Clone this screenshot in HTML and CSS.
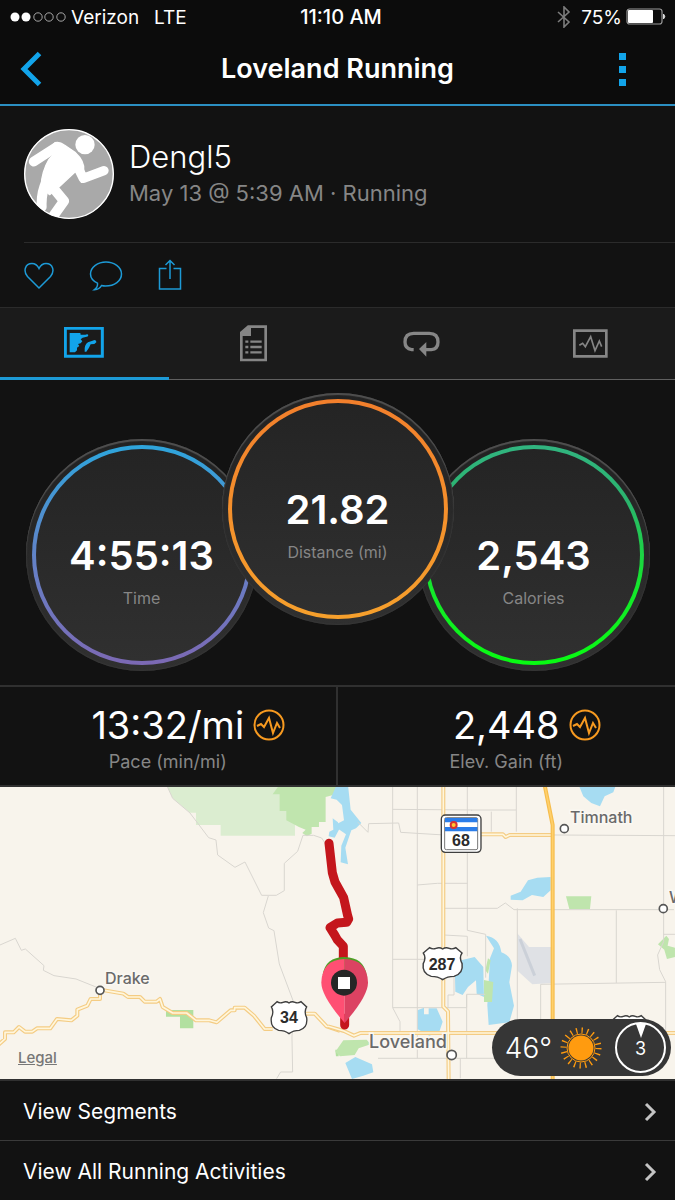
FILE: index.html
```
<!doctype html>
<html lang="en">
<head>
	<meta charset="utf-8">
	<meta name="viewport" content="width=device-width, initial-scale=1">
	<title>Loveland Running</title>
	<link rel="stylesheet" href="styles.css">
</head>
<body>
	<div class="status">
		<div class="status-left">
			<svg class="signal" width="56" height="12" viewBox="0 0 56 12">
				<g fill="#fff"><circle cx="5" cy="6" r="4.5"/><circle cx="16" cy="6" r="4.5"/></g>
				<g fill="none" stroke="#ccc" stroke-width=".8"><circle cx="28" cy="6" r="4.2"/><circle cx="39" cy="6" r="4.2"/><circle cx="51" cy="6" r="4.2"/></g>
			</svg>
			<span>Verizon</span>
			<span class="network">LTE</span>
		</div>
		<div class="clock">11:10 AM</div>
		<div class="status-right">
			<svg width="14" height="22" viewBox="0 0 14 22" fill="none" stroke="#7d7d7d" stroke-width="1.6"><path d="M1 6l11 10-5 5V1l5 5L1 16"/></svg>
			<span class="percent">75%</span>
			<svg width="40" height="18" viewBox="0 0 40 18">
				<rect x="1" y="1" width="35" height="15" rx="2.5" fill="none" stroke="#999" stroke-width="1.2"/>
				<rect x="2" y="2" width="25" height="13" rx="1" fill="#fff"/>
				<path d="M37.5 6q2.500 2.500 0 5z" fill="#fff" stroke="#ddd"/>
			</svg>
		</div>
	</div>

	<header class="header">
		<button class="icon-btn" aria-label="Back">
			<svg width="22" height="36" viewBox="0 0 22 36" fill="none" stroke="#12a4ea" stroke-width="5"><path d="M19.500 2.500L4 18l15.500 15.500"/></svg>
		</button>
		<h1>Loveland Running</h1>
		<button class="icon-btn menu" aria-label="More">
			<svg width="7" height="33" viewBox="0 0 7 33" fill="#12a4ea"><path d="M0 0h7v7H0zM0 13h7v7H0zM0 26h7v7H0z"/></svg>
		</button>
	</header>

	<section class="profile">
		<div class="user">
			<svg class="avatar" viewBox="73 56 270 270">
				<defs><clipPath id="face"><circle cx="208" cy="191" r="134"/></clipPath></defs>
				<circle cx="208" cy="191" r="134" fill="#a9a9a9"/>
				<g clip-path="url(#face)" fill="#fff" stroke="#fff" stroke-linecap="round" stroke-linejoin="round">
					<circle cx="256" cy="103" r="29" stroke="none"/>
					<path d="M102 154l68-44" fill="none" stroke-width="29"/>
					<path d="M166 97q14-4 28 7l32 22q30 28 26 55l-26 4-45 42-31 26-26-24q2-45 24-82l20-22-16-12z" stroke-width="4"/>
					<path d="M234 170l17 34 62-23" fill="none" stroke-width="28"/>
					<path d="M140 215q-16 32-14 75M155 226l38 46-34 48" fill="none" stroke-width="30"/>
				</g>
				<circle cx="208" cy="191" r="133" fill="none" stroke="#fff" stroke-width="4"/>
			</svg>
			<div>
				<h2>Dengl5</h2>
				<p class="when">May 13 @ 5:39 AM · Running</p>
			</div>
		</div>
		<div class="actions">
			<button class="icon-btn" aria-label="Like">
				<svg width="30" height="30" viewBox="0 0 30 30"><path d="M15 28L3.500 16.500C-1 11 1 3.500 8 3.500c4 0 6 3 7 5 1-2 3-5 7-5 7 0 9 7.500 4.500 13z"/></svg>
			</button>
			<button class="icon-btn" aria-label="Comment">
				<svg width="34" height="32" viewBox="0 0 34 32"><path d="M8.500 24.200C4 22 1.500 19 1.500 15 1.500 8 9 3 17 3s15.500 5 15.500 12-7 12-16 12q-2 0-4-.5-2 4-7 4.200 3.500-2.500 3-6.500z"/></svg>
			</button>
			<button class="icon-btn" aria-label="Share">
				<svg width="24" height="32" viewBox="0 0 24 32"><path d="M8.500 9.500H1.500V30H22.500V9.500H15.500M12 20V2M7.500 6L12 1.500 16.500 6"/></svg>
			</button>
		</div>
	</section>

	<nav class="tabs">
		<a href="#map" class="tab active" aria-label="Map">
			<svg width="40" height="31" viewBox="43 38 120 93" fill="none" stroke="#12a4ea">
				<path d="M47 42h111v84H47z" stroke-width="9"/>
				<path d="M60 56h32l1 5 14 0q8-3 9 2 0 5-8 5l-9 2-6 5 5 6-5 6-8 2 4 6-7 5v8l-6 6H60z" fill="#12a4ea" stroke="none"/>
				<path d="M105 112q-2-20 10-28l20-7q6 1 5 7l-6 5-11 1-5 10-8 12z" fill="#12a4ea" stroke="none"/>
			</svg>
		</a>
		<a href="#details" class="tab" aria-label="Details">
			<svg width="27" height="37" viewBox="569 29 81 111" fill="none" stroke="#868686">
				<path d="M573 134V52l21-18h52v100z" stroke-width="8"/>
				<path d="M573 62V52l21-18h8v28z" fill="#868686" stroke="none"/>
				<path d="M600 79h34M600 95h34M600 111h34" stroke-width="7"/>
				<path d="M585 79h9M585 95h9M585 111h9" stroke-width="7"/>
			</svg>
		</a>
		<a href="#laps" class="tab" aria-label="Laps">
			<svg width="37" height="26" viewBox="25 52 111 78" fill="none" stroke="#868686">
				<path d="M57 108h-6q-20-3-20-23 0-26 26-26h47q26 0 26 26 0 21-20 23H92" stroke-width="10"/>
				<path d="M73 106l22-21v44z" fill="#868686" stroke="none"/>
			</svg>
		</a>
		<a href="#charts" class="tab" aria-label="Charts">
			<svg width="35" height="29" viewBox="534 41 105 87" fill="none" stroke="#868686">
				<path d="M538 46h96v77h-96z" stroke-width="8"/>
				<path d="M553 90l10-6 8 10 16-30 13 42 13-29 7 17" stroke-width="5"/>
			</svg>
		</a>
	</nav>

	<section class="dials">
		<div class="dial">
			<div class="ring time">
				<strong>4:55:13</strong>
				<span>Time</span>
			</div>
		</div>
		<div class="dial front">
			<div class="ring distance">
				<strong>21.82</strong>
				<span>Distance (mi)</span>
			</div>
		</div>
		<div class="dial">
			<div class="ring calories">
				<strong>2,543</strong>
				<span>Calories</span>
			</div>
		</div>
	</section>

	<section class="stats">
		<div class="stat">
			<div class="stat-value">
				<b>13:32/mi</b>
				<svg width="32" height="32" viewBox="0 0 32 32"><circle cx="16" cy="16" r="14.500"/><path d="M4 17l4-2 3 3 5-9 4 15 4-10 3 5"/></svg>
			</div>
			<p>Pace (min/mi)</p>
		</div>
		<div class="stat">
			<div class="stat-value">
				<b>2,448</b>
				<svg width="32" height="32" viewBox="0 0 32 32"><circle cx="16" cy="16" r="14.500"/><path d="M4 17l4-2 3 3 5-9 4 15 4-10 3 5"/></svg>
			</div>
			<p>Elev. Gain (ft)</p>
		</div>
	</section>

	<section class="map">
		<svg class="map-canvas" viewBox="0 0 675 292">
			<defs>
				<path id="shield" d="M-36-46l-17 16q9 14 0 32-4 30 22 38 18 0 31 10 13-10 31-10 26-8 22-38-9-18 0-32l-17-16q-9 6-18 2-10-4-18 2-8-6-18-2-10 4-18-2z"/>
			</defs>

			<!-- west half -->
			<g transform="translate(0 -2) scale(.3333)">
				<path fill="#dbedd0" d="M500 0h370v100h15v52H662v-32h-74V83h-18L518 40z"/>
				<path fill="#c0e5ae" d="M838 0h175v26l-36 10v75h-20v15h-22v20l-14 8-14-10 10-10-20-8-38-20v-28h-20V28h-21z"/>
				<path fill="#b2e0a0" d="M498 675h82v55h-40v-35h-42zM1006 794h10v20h-8z"/>
				<g class="minor">
					<path d="M500 0l18 40 52 44 56 74 22 7 5 45 52 37 30-16 50 100h44l24-14v-82l40-36 16-48h32l24 8 12 18 26 30"/>
					<path d="M805 333l-15 50 16 46 16 8 16 100 42 112-4 110 2 102h-36l-12 20M0 480l46-20 18 36 12-4 56 50-2 14 32 16 66 10 70 28"/>
				</g>
				<path class="road" d="M-10 784l25-22v-20h26l16-16 18 14h22l14-10h40l20-28 43 4 18-14v-18l30-12 10-20h28v-28l70 12 14 10h36l14 14h36l10-8 8 24 30 18h42l28 22h40l22 6 42-36h12v-8h30l28 24 32 40h24M910 686h34l36 38 40 14"/>
				<path class="road-in" d="M-10 784l25-22v-20h26l16-16 18 14h22l14-10h40l20-28 43 4 18-14v-18l30-12 10-20h28v-28l70 12 14 10h36l14 14h36l10-8 8 24 30 18h42l28 22h40l22 6 42-36h12v-8h30l28 24 32 40h24M910 686h34l36 38 40 14"/>
			</g>

			<!-- east half -->
			<g transform="translate(338 -2) scale(.3333)">
				<g fill="#a6dcf2">
					<path d="M-4 0h34l8 74 32 40-16 16-14 6-18 52 8 50-22-6 2-50 14-34-26-18 0-14 20-10-6-46-16-16-18-4z"/>
					<path d="M-16 100l16 12 4 20-14 26-18-4 2-14 12-6zM722 0h112l-8 22-26 12-14 30-26-10-24-20zM518 332l30-12 22-34 28-8 40-2v40l-22 20-34-6-28 16-36-2z"/>
					<path d="M444 452q40 5 46 50 30 10 32 40l-8 50 14 70-14 50-62 8-4-60 8-140 12-30zM350 530l60-14 26 30 2 90-22-10-2-40-24 20-16 24-22-10z"/>
					<path d="M238 676l20-8v20h14v-18h24l18 40-10 30-30 12-36-20zM22 834l30-18 50 22 4 24-30 10-34 10z"/>
				</g>
				<g fill="#bfe5ad">
					<path d="M684 334h76l-4 38h-62zM438 585l28 6-4 60h-24zM450 520l8 6-8 40-8-10zM-8 800l24-34 70-2 12 14-36 12-12 20-44 4zM960 478l25-26 8 10-4 20 22 6v28l-24 6-8-28z"/>
				</g>
				<path fill="#dfe1e5" d="M537 444l36 42h70v108l-60 4-46-42z"/>
				<path stroke="#cbd0d8" stroke-width="9" d="M546 462l44 110"/>
				<g class="minor">
					<path d="M164 0v668l22 42v30M238 0v820M388 0v436l55 12v130M403 76h-4M460 80v60M535 0v140M538 370v340M835 376v218M977 0v470l-18 40 6 44 18 36v180M164 73l240 2h130M60 112l30 30 2-26 90-2 6 28 130 8M640 150l371 2M238 300l60-5h90M318 370h160l24-16 26 20h480M318 450l70 4v60M164 523h150M164 668h222v-40h56M608 706V598l375-6M977 448h34M120 820h370M386 630v190M330 670v-40h18v-90M367 820v60"/>
				</g>
				<path class="road" d="M316 0v665l14 14 2 210M405 148h90l8 8 12-6h128M-30 724l48 14 30 14 20-8h950"/>
				<path class="road-in" d="M316 0v665l14 14 2 210M405 148h90l8 8 12-6h128M-30 724l48 14 30 14 20-8h950"/>
				<path fill="none" stroke="#f6bd4d" stroke-width="12" d="M620 0l24 120v765"/>
				<path fill="none" stroke="#ffd06b" stroke-width="5" d="M620 0l24 120v765"/>

				<!-- run track -->
				<path class="track" d="M-27 175l10 88 8 28 26 47 12 54 3 10-6 10-28 2-22 14 14 22 8 14 18 20v34M20 700v20"/>
				<path fill="#4d9f25" d="M-46 570q8-54 66-54 58 2 66 54z"/>
				<path fill="#ff4f73" d="M20 522q-68 2-70 70-1 40 70 122z"/>
				<path fill="#dc4262" d="M20 522q68 2 70 70 1 40-70 122z"/>
				<circle cx="18" cy="593" r="39" fill="#262626"/>
				<path fill="#fff" d="M0 576h36v36H0z"/>

				<g fill="#fff" stroke="#565656" stroke-width="5">
					<circle cx="679" cy="131" r="12"/>
					<circle cx="976" cy="371" r="12"/>
					<circle cx="341" cy="810" r="14"/>
					<circle cx="-714" cy="616" r="12"/>
				</g>
				<g fill="#fff" stroke="#3f3f3f" stroke-width="4">
					<use href="#shield" x="-147" y="696"/>
					<use href="#shield" transform="translate(314 534) scale(1.1 1)"/>
					<use href="#shield" x="874" y="738"/>
					<rect x="310" y="90" width="119" height="112" rx="12"/>
					<rect x="320" y="98" width="99" height="96" rx="5" stroke="#777" stroke-width="3"/>
				</g>
				<path fill="#2b7de9" d="M321 99h97v40h-97z"/>
				<path fill="#fff" d="M321 112h97v14h-97z"/>
				<circle cx="347" cy="120" r="9" fill="#ffc933" stroke="#d93430" stroke-width="6"/>
			</g>

			<g class="places">
				<text x="105" y="197">Drake</text>
				<text x="570" y="36">Timnath</text>
				<text x="369" y="261" class="city">Loveland</text>
				<text x="669" y="116">W</text>
			</g>
			<g class="routes">
				<text x="289" y="236">34</text>
				<text x="442" y="183">287</text>
				<text x="461" y="59">68</text>
			</g>
		</svg>
		<a class="legal" href="#legal">Legal</a>
		<div class="weather">
			<span class="temp">46°</span>
			<svg class="sun" width="42" height="42" viewBox="-21 -21 42 42" stroke="#ff9b0f">
				<circle r="12.500" fill="#ff9b0f" stroke="none"/>
				<circle r="14" fill="none" stroke-width="1"/>
				<circle r="17.500" fill="none" stroke-width="6" stroke-dasharray="1.300 4.198"/>
			</svg>
			<div class="wind">
				<svg width="10" height="14" viewBox="0 0 10 14"><path d="M0 0h10L5 14z" fill="#fff"/></svg>
				<span>3</span>
			</div>
		</div>
	</section>

	<nav class="links">
		<a href="#segments">View Segments
			<svg width="14" height="20" viewBox="0 0 14 20"><path d="M3 2l8 8-8 8"/></svg>
		</a>
		<a href="#activities">View All Running Activities
			<svg width="14" height="20" viewBox="0 0 14 20"><path d="M3 2l8 8-8 8"/></svg>
		</a>
	</nav>
</body>
</html>
```
FILE: styles.css
```
*{
	margin:0;
	padding:0;
	box-sizing:border-box;
}
body{
	background-color:#121212;
	color:#fff;
	font-family:Inter, "Liberation Sans", sans-serif;
}
svg{
	display:block;
	flex:none;
}
a{
	color:inherit;
	text-decoration:none;
}
.icon-btn{
	display:block;
	border:none;
	background:none;
	cursor:pointer;
}

/* status bar */
.status{
	display:grid;
	grid-template-columns:1fr auto 1fr;
	align-items:center;
	height:34px;
	padding:0 9px 0 10px;
	background-color:#0c0c0c;
	font-size:19px;
}
.status-left, .status-right{
	display:flex;
	align-items:center;
}
.signal{
	margin-right:5px;
}
.network{
	margin-left:15px;
}
.clock{
	margin-left:6px;
	font-size:20px;
	font-weight:500;
}
.status-right{
	justify-content:flex-end;
}
.percent{
	margin:0 4px 0 10px;
}

/* title bar */
.header{
	display:grid;
	grid-template-columns:1fr auto 1fr;
	align-items:center;
	height:72px;
	padding:0 49px 0 20px;
	background-color:#0c0c0c;
	border-bottom:2px solid #2b8fc2;
}
.header h1{
	margin-left:29px;
	font-size:27px;
	font-weight:600;
	line-height:32px;
}
.menu{
	justify-self:end;
}

/* profile */
.profile{
	padding-left:24px;
}
.user{
	display:flex;
	align-items:center;
	gap:15px;
	padding:23px 0;
	border-bottom:1px solid #2b2b2b;
}
.avatar{
	width:90px;
	height:90px;
}
.user h2{
	font-size:31px;
	font-weight:300;
	line-height:38px;
}
.when{
	color:#868686;
	font-size:22px;
	line-height:34px;
}
.actions{
	display:flex;
	align-items:center;
	gap:35px;
	height:64px;
}
.actions svg{
	fill:none;
	stroke:#1d9ad6;
	stroke-width:1.5;
}

/* tabs */
.tabs{
	display:grid;
	grid-template-columns:repeat(4, 1fr);
	height:73px;
	background-color:#1b1b1b;
	border-top:1px solid #2b2b2b;
}
.tab{
	display:flex;
	align-items:center;
	justify-content:center;
	border-bottom:1px solid #606060;
}
.tab.active{
	border-bottom:3px solid #1d9ad6;
}

/* dials */
.dials{
	display:flex;
	justify-content:center;
	align-items:flex-end;
	padding:13px 0 14px;
}
.dial{
	width:232px;
	height:232px;
	padding:6px;
	border-radius:50%;
	background:linear-gradient(#222, #303030);
	box-shadow:inset 0 2px 1px #505050, inset 0 0 2px #444;
}
.dial.front{
	z-index:1;
	margin:0 -36px 46px;
}
.ring{
	display:flex;
	flex-direction:column;
	align-items:center;
	height:220px;
	padding-top:83px;
	border:4px solid transparent;
	border-radius:50%;
}
.ring strong{
	font-size:40px;
	font-weight:600;
	line-height:48px;
}
.ring span{
	margin-top:8px;
	color:#868686;
	font-size:16px;
	line-height:20px;
}
.time{
	background:linear-gradient(#242424, #303030) padding-box, linear-gradient(#2ea5dc, #6680c6 55%, #7c69b4) border-box;
}
.distance{
	background:linear-gradient(#242424, #303030) padding-box, linear-gradient(#f27f2c, #f6a02c) border-box;
}
.calories{
	background:linear-gradient(#242424, #303030) padding-box, linear-gradient(#31b580, #2bb36e 25%, #14e82b 65%, #08fb12) border-box;
}

/* pace and elevation */
.stats{
	display:grid;
	grid-template-columns:1fr 1fr;
	border-top:2px solid #303030;
	border-bottom:2px solid #303030;
}
.stat{
	padding:14px 0 10px;
	text-align:center;
}
.stat:first-child{
	border-right:2px solid #303030;
}
.stat-value{
	display:grid;
	grid-template-columns:1fr auto 1fr;
	align-items:center;
	gap:9px;
}
.stat-value b{
	grid-column:2;
	font-size:38px;
	font-weight:400;
	line-height:48px;
}
.stat-value svg{
	fill:none;
	stroke:#f79a20;
	stroke-width:2;
}
.stat p{
	color:#868686;
	font-size:18px;
	line-height:26px;
}

/* map */
.map{
	position:relative;
	border-bottom:2px solid #303030;
	background-color:#f8f4ec;
}
.map-canvas{
	width:100%;
}
.minor{
	fill:none;
	stroke:#d9d6d0;
	stroke-width:3;
}
.road{
	fill:none;
	stroke:#f4cc84;
	stroke-width:12;
	stroke-linejoin:round;
}
.road-in{
	fill:none;
	stroke:#fff6dc;
	stroke-width:5;
	stroke-linejoin:round;
}
.track{
	fill:none;
	stroke:#c4161c;
	stroke-width:27;
	stroke-linecap:round;
	stroke-linejoin:round;
}
.places{
	fill:#6a6a6a;
	stroke:#fbf8f2;
	stroke-width:3px;
	paint-order:stroke;
	font-size:16px;
	font-weight:500;
}
.city{
	font-size:18px;
}
.routes{
	fill:#2b2b2b;
	font-family:"Liberation Sans", sans-serif;
	font-size:16px;
	font-weight:700;
	text-anchor:middle;
}
.legal{
	position:absolute;
	left:18px;
	bottom:12px;
	color:#777;
	font-size:15px;
	font-weight:500;
	line-height:18px;
	text-decoration:underline;
}
.weather{
	position:absolute;
	right:4px;
	bottom:3px;
	display:flex;
	align-items:center;
	height:57px;
	padding:0 5px 0 13px;
	border-radius:29px;
	background-color:#363636;
}
.temp{
	font-size:28px;
	font-weight:300;
}
.sun{
	margin:0 13px 0 8px;
}
.wind{
	display:flex;
	flex-direction:column;
	align-items:center;
	width:51px;
	height:51px;
	border:2px solid #fff;
	border-radius:50%;
	font-size:18px;
	line-height:22px;
}

/* bottom links */
.links a{
	display:flex;
	align-items:center;
	justify-content:space-between;
	height:60px;
	padding:2px 18px 0 23px;
	border-bottom:1px solid #3a3a3a;
	font-size:21px;
}
.links svg{
	fill:none;
	stroke:#c4c4c4;
	stroke-width:3;
}
```
